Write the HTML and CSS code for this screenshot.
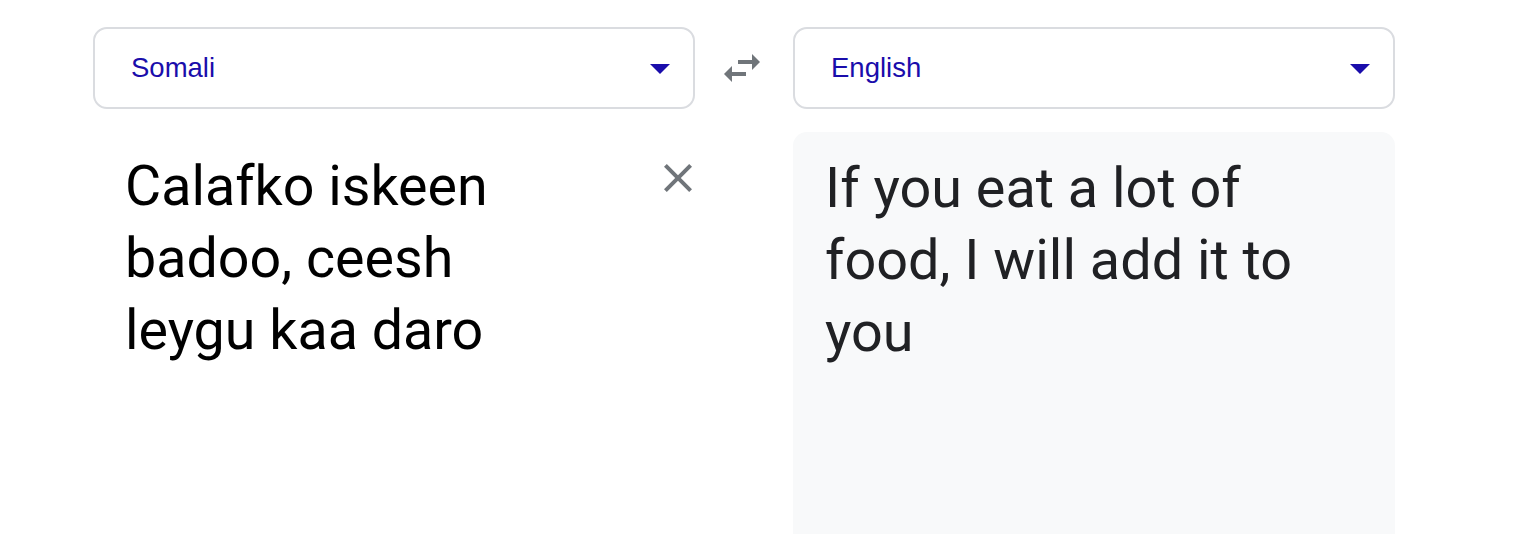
FILE: index.html
```html
<!DOCTYPE html>
<html lang="en">
<head>
<meta charset="utf-8">
<title>Translate</title>
<link rel="stylesheet" href="styles.css">
</head>
<body>
<div class="translator">
  <div class="lang-row">
    <div class="lang-select">
      <span class="lang-name">Somali</span>
      <span class="caret"></span>
    </div>
    <div class="swap">
      <svg viewBox="0 0 24 24" width="48" height="48"><path fill="#70757a" d="M6.99 11L3 15l3.99 4v-3H14v-2H6.99v-3zM21 9l-4-4v3H10v2h7v3l4-4z"/></svg>
    </div>
    <div class="lang-select">
      <span class="lang-name">English</span>
      <span class="caret"></span>
    </div>
  </div>
  <div class="text-row">
    <div class="source">
      <div class="source-text">Calafko iskeen badoo, ceesh leygu kaa daro</div>
      <div class="clear">
        <svg viewBox="0 0 24 24" width="48" height="48"><path fill="#70757a" d="M19 6.41L17.59 5 12 10.59 6.41 5 5 6.41 10.59 12 5 17.59 6.41 19 12 13.41 17.59 19 19 17.59 13.41 12z"/></svg>
      </div>
    </div>
    <div class="spacer"></div>
    <div class="target">
      <div class="target-text">If you eat a lot of food, I will add it to you</div>
    </div>
  </div>
</div>
</body>
</html>
```
FILE: styles.css
```css
html, body {
  margin: 0;
  padding: 0;
  background: #fff;
  overflow: hidden;
}
body {
  font-family: Roboto, "Liberation Sans", Arial, sans-serif;
  height: 534px;
}
.translator {
  padding: 27px 0 0 93px;
  width: 1302px;
}
.lang-row {
  display: flex;
  align-items: center;
  height: 82px;
}
.lang-select {
  box-sizing: border-box;
  width: 602px;
  height: 82px;
  border: 2px solid #dadce0;
  border-radius: 14px;
  display: flex;
  align-items: center;
  justify-content: space-between;
  padding: 0 23px 0 36px;
}
.lang-name {
  font-family: "Liberation Sans", Arial, sans-serif;
  font-size: 27.5px;
  color: #1a0dab;
}
.caret {
  width: 0;
  height: 0;
  border-left: 10px solid transparent;
  border-right: 10px solid transparent;
  border-top: 10px solid #1a0dab;
  margin-top: 2px;
}
.swap {
  width: 98px;
  display: flex;
  justify-content: center;
}
.swap svg {
  display: block;
  margin-left: -4px;
}
.text-row {
  display: flex;
  margin-top: 23px;
}
.source {
  width: 602px;
  display: flex;
  justify-content: space-between;
  box-sizing: border-box;
  padding: 18px 0 0 32px;
}
.source-text {
  font-size: 55.6px;
  line-height: 72px;
  color: #000;
  width: 420px;
}
.clear {
  margin-top: 4px;
  margin-right: -7px;
}
.clear svg {
  display: block;
}
.spacer {
  width: 98px;
}
.target {
  width: 602px;
  height: 420px;
  background: #f8f9fa;
  border-radius: 14px 14px 0 0;
  box-sizing: border-box;
  padding: 20px 32px 0 32px;
}
.target-text {
  font-size: 55.8px;
  line-height: 72px;
  color: #202124;
  width: 500px;
}
```
